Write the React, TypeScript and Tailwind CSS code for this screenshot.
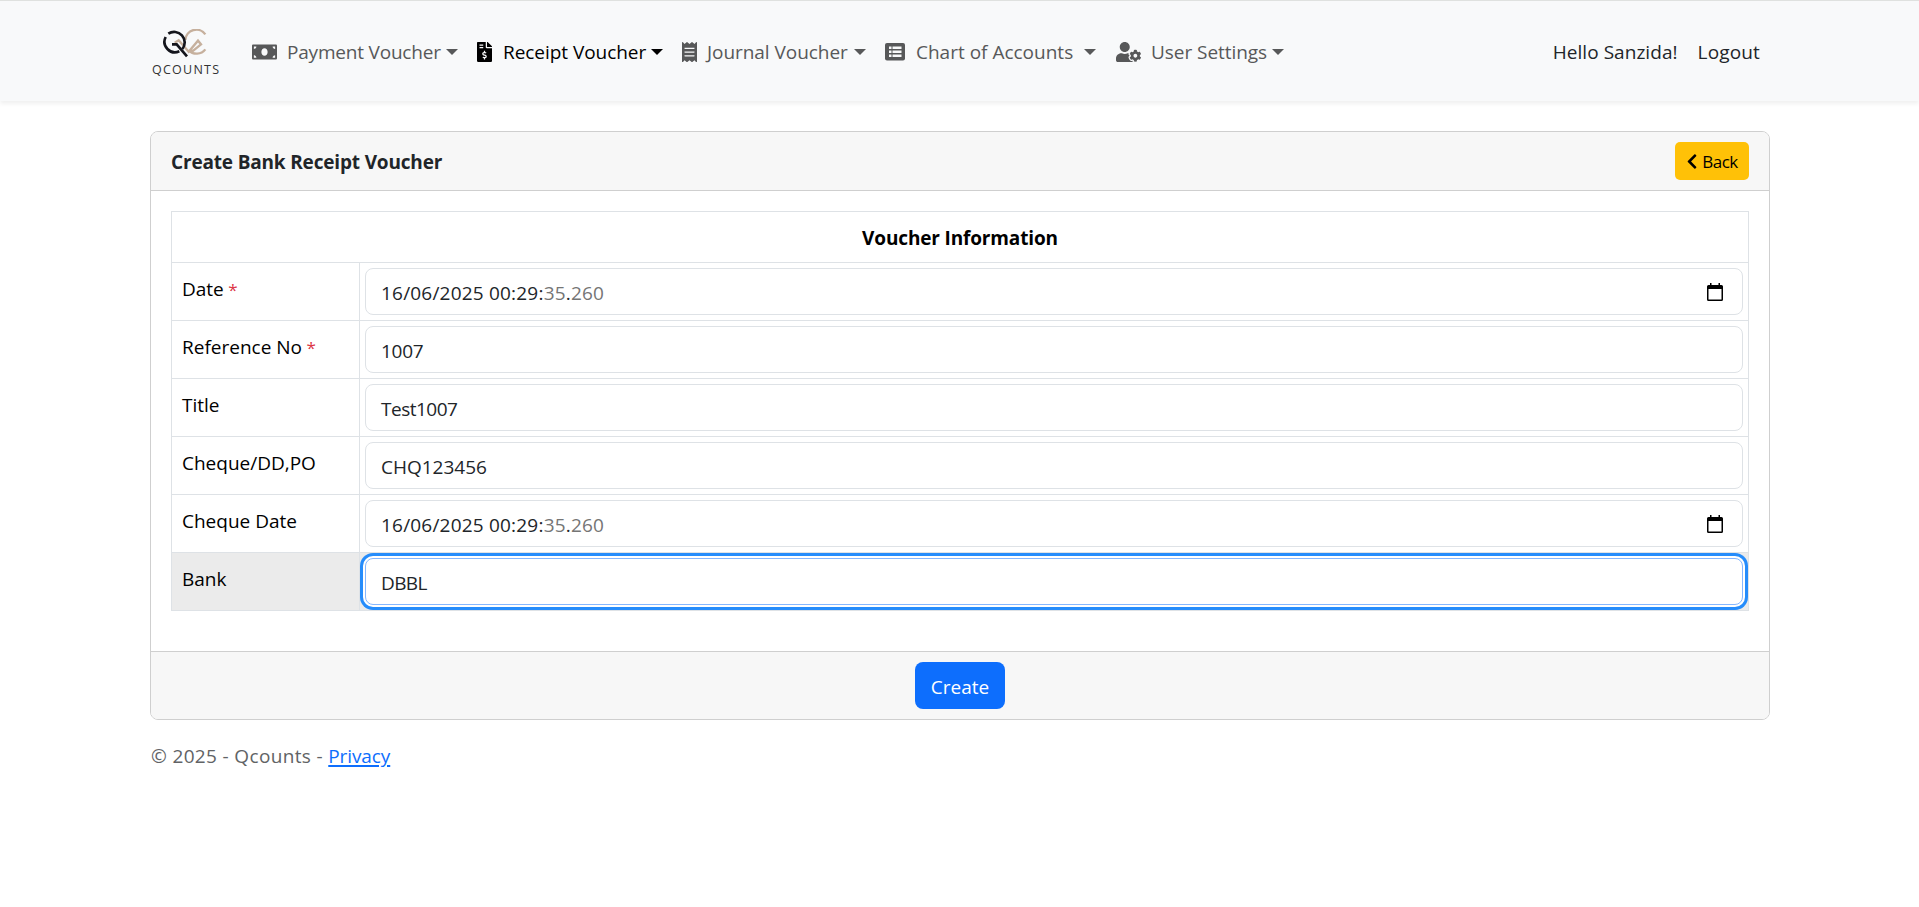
import React from "react";
import { FaMoneyBill, FaFileInvoiceDollar, FaReceipt, FaUserCog, FaChevronLeft } from "react-icons/fa";

function Caret({ className }: { className: string }) {
  return <span className={"h-0 w-0 border-x-[6px] border-t-[6px] border-x-transparent border-t-current " + className} />;
}

function Logo() {
  return (
    <a className="mr-[32px] flex h-[75px] w-[70px] flex-col pt-[15px]">
      <svg width="46" height="30" viewBox="36 12 138 90" fill="none" className="ml-[12px] shrink-0">
        <path d="M166 28A33 33 0 0 0 106 45M166 73A33 33 0 0 1 116 76" stroke="#c6b09d" strokeWidth="7" />
        <path d="M74 53L86 46L116 80L144 47L153 58L127 79L120 71" stroke="#c6b09d" strokeWidth="7" />
        <path d="M55 26A31.500 31.500 0 0 1 97 72M88 79A31.500 31.500 0 0 1 47 36" stroke="#14151c" strokeWidth="8" />
        <path d="M66 58H80L111 94" stroke="#14151c" strokeWidth="8" />
      </svg>
      <span className="ml-[2px] mt-[4px] whitespace-nowrap text-[12.500px] leading-[14px] tracking-[1.250px] text-[#333]">QCOUNTS</span>
    </a>
  );
}

function ListIcon() {
  return (
    <svg width="20" height="18" viewBox="0 0 20 18">
      <rect width="20" height="17.500" rx="2" fill="currentColor" />
      <path d="M4 4.700h2.500M7.500 4.700h9M4 8.700h2.500M7.500 8.700h9M4 12.700h2.500M7.500 12.700h9" stroke="#f8f9fa" strokeWidth="2.600" />
    </svg>
  );
}

function CalendarIcon() {
  return (
    <svg width="16" height="19" viewBox="0 0 16 19" className="mt-px">
      <path d="M3 0h1.500v2h7V0H13v2h1.500A1.500 1.500 0 0 1 16 3.500v13a1.500 1.500 0 0 1-1.500 1.500h-13A1.500 1.500 0 0 1 0 16.500v-13A1.500 1.500 0 0 1 1.500 2H3zM1.500 6v10.500h13V6z" fill="#000" fillRule="evenodd" />
    </svg>
  );
}

type Row = { label: string; tracking: string; required?: boolean; value: string; muted?: boolean; focus?: boolean };

const rows: Row[] = [
  { label: "Date", tracking: "tracking-[0.2px]", required: true, value: "16/06/2025 00:29:", muted: true },
  { label: "Reference No", tracking: "tracking-[-0.3px]", required: true, value: "1007" },
  { label: "Title", tracking: "tracking-[-0.5px]", value: "Test1007" },
  { label: "Cheque/DD,PO", tracking: "", value: "CHQ123456" },
  { label: "Cheque Date", tracking: "tracking-[0.2px]", value: "16/06/2025 00:29:", muted: true },
  { label: "Bank", tracking: "tracking-[-0.6px]", value: "DBBL", focus: true },
];

function FormRow({ row }: { row: Row }) {
  return (
    <div className="flex h-[58px] border-b border-[#dee2e6]">
      <div className={"w-[188px] shrink-0 border-r border-[#dee2e6] pl-[10px] pt-[11px] leading-[30px] text-black " + (row.focus ? "bg-[#ebebeb]" : "")}>
        <span>{row.label}</span>
        {row.required && <span className="text-[17px] text-[#dc3545]"> *</span>}
      </div>
      <div className={"flex-1 px-[5px] py-[5px] " + (row.focus ? "bg-[#ebebeb]" : "")}>
        <div
          className={
            "flex h-[47px] items-center rounded-[8px] border bg-white pl-[15px] pr-[19px] text-[#212529] " +
            (row.focus ? "border-[#86b7fe] shadow-[0_0_0_2px_white,0_0_0_5px_#258cfb]" : "border-[#dee2e6]")
          }
        >
          <span className={"flex-1 pt-[2px] " + row.tracking}>
            {row.value}
            {row.muted && (
              <span className="text-[#757575]">
                35<span className="text-[#212529]">.</span>260
              </span>
            )}
          </span>
          {row.muted && <CalendarIcon />}
        </div>
      </div>
    </div>
  );
}

export default function App() {
  return (
    <div className="flex min-h-[907px] flex-col bg-white font-['Open_Sans','Noto_Sans',sans-serif] text-[19px] leading-[30px] text-[#212529]">
      <header className="flex h-[101px] items-center border-t border-[#dfe1df] bg-[#f8f9fa] px-[150px] pt-px shadow-[0_3px_4px_rgba(0,0,0,0.06)]">
        <Logo />
        <nav className="flex flex-1 items-center whitespace-nowrap text-[#575859]">
          <a className="flex w-[225px] items-center">
            <FaMoneyBill className="mr-[10px] h-[20px] w-[25px]" />
            <span className="tracking-[-0.2px]">Payment Voucher</span>
            <Caret className="ml-[5px]" />
          </a>
          <a className="flex w-[205px] items-center text-black">
            <FaFileInvoiceDollar className="mr-[11px] h-[20px] w-[15px]" />
            <span className="tracking-[-0.05px]">Receipt Voucher</span>
            <Caret className="ml-[5px]" />
          </a>
          <a className="flex w-[203px] items-center">
            <FaReceipt className="mr-[10px] h-[20px] w-[15px]" />
            <span className="tracking-[-0.05px]">Journal Voucher</span>
            <Caret className="ml-[6px]" />
          </a>
          <a className="flex w-[231px] items-center">
            <span className="mr-[11px]"><ListIcon /></span>
            <span>Chart of Accounts</span>
            <Caret className="ml-[11px]" />
          </a>
          <a className="flex items-center">
            <FaUserCog className="mr-[10px] h-[20px] w-[25px]" />
            <span className="tracking-[-0.05px]">User Settings</span>
            <Caret className="ml-[5px]" />
          </a>
        </nav>
        <div className="flex items-center gap-[20px] pr-[9px]">
          <span className="tracking-[0.050px]">Hello Sanzida!</span>
          <span className="tracking-[0.150px]">Logout</span>
        </div>
      </header>

      <main className="ml-[150px] mr-[149px] mt-[30px] flex flex-col rounded-[8px] border border-[#cfcfcf]">
        <div className="flex h-[59px] items-center justify-between rounded-t-[7px] border-b border-[#cfcfcf] bg-[#f7f7f7] px-[20px]">
          <h1 className="pt-[2px] font-bold tracking-[-0.17px]">Create Bank Receipt Voucher</h1>
          <button className="flex h-[38px] w-[74px] items-center justify-center gap-[4px] rounded-[5px] bg-[#ffc107] text-[17px] text-black">
            <FaChevronLeft className="h-[17px] w-[12px]" />
            <span className="pt-[2px] tracking-[-0.500px]">Back</span>
          </button>
        </div>
        <div className="px-[20px] pb-[40px] pt-[20px]">
          <div className="border-x border-t border-[#dee2e6]">
            <div className="flex h-[51px] items-center justify-center border-b border-[#dee2e6] pt-[2px] font-bold text-black">
              <span className="tracking-[-0.150px]">Voucher Information</span>
            </div>
            {rows.map((row) => (
              <FormRow key={row.label} row={row} />
            ))}
          </div>
        </div>
        <div className="flex h-[68px] items-center justify-center rounded-b-[7px] border-t border-[#cfcfcf] bg-[#f7f7f7]">
          <button className="h-[47px] w-[90px] rounded-[8px] bg-[#0d6efd] pt-[2px] text-white">Create</button>
        </div>
      </main>

      <footer className="ml-[151px] mt-[21px] text-[#616365]">
        <span className="tracking-[0.350px]">© 2025 - Qcounts - </span>
        <a className="tracking-[-0.1px] text-[#0d6efd] underline decoration-2 underline-offset-2">Privacy</a>
      </footer>
    </div>
  );
}
